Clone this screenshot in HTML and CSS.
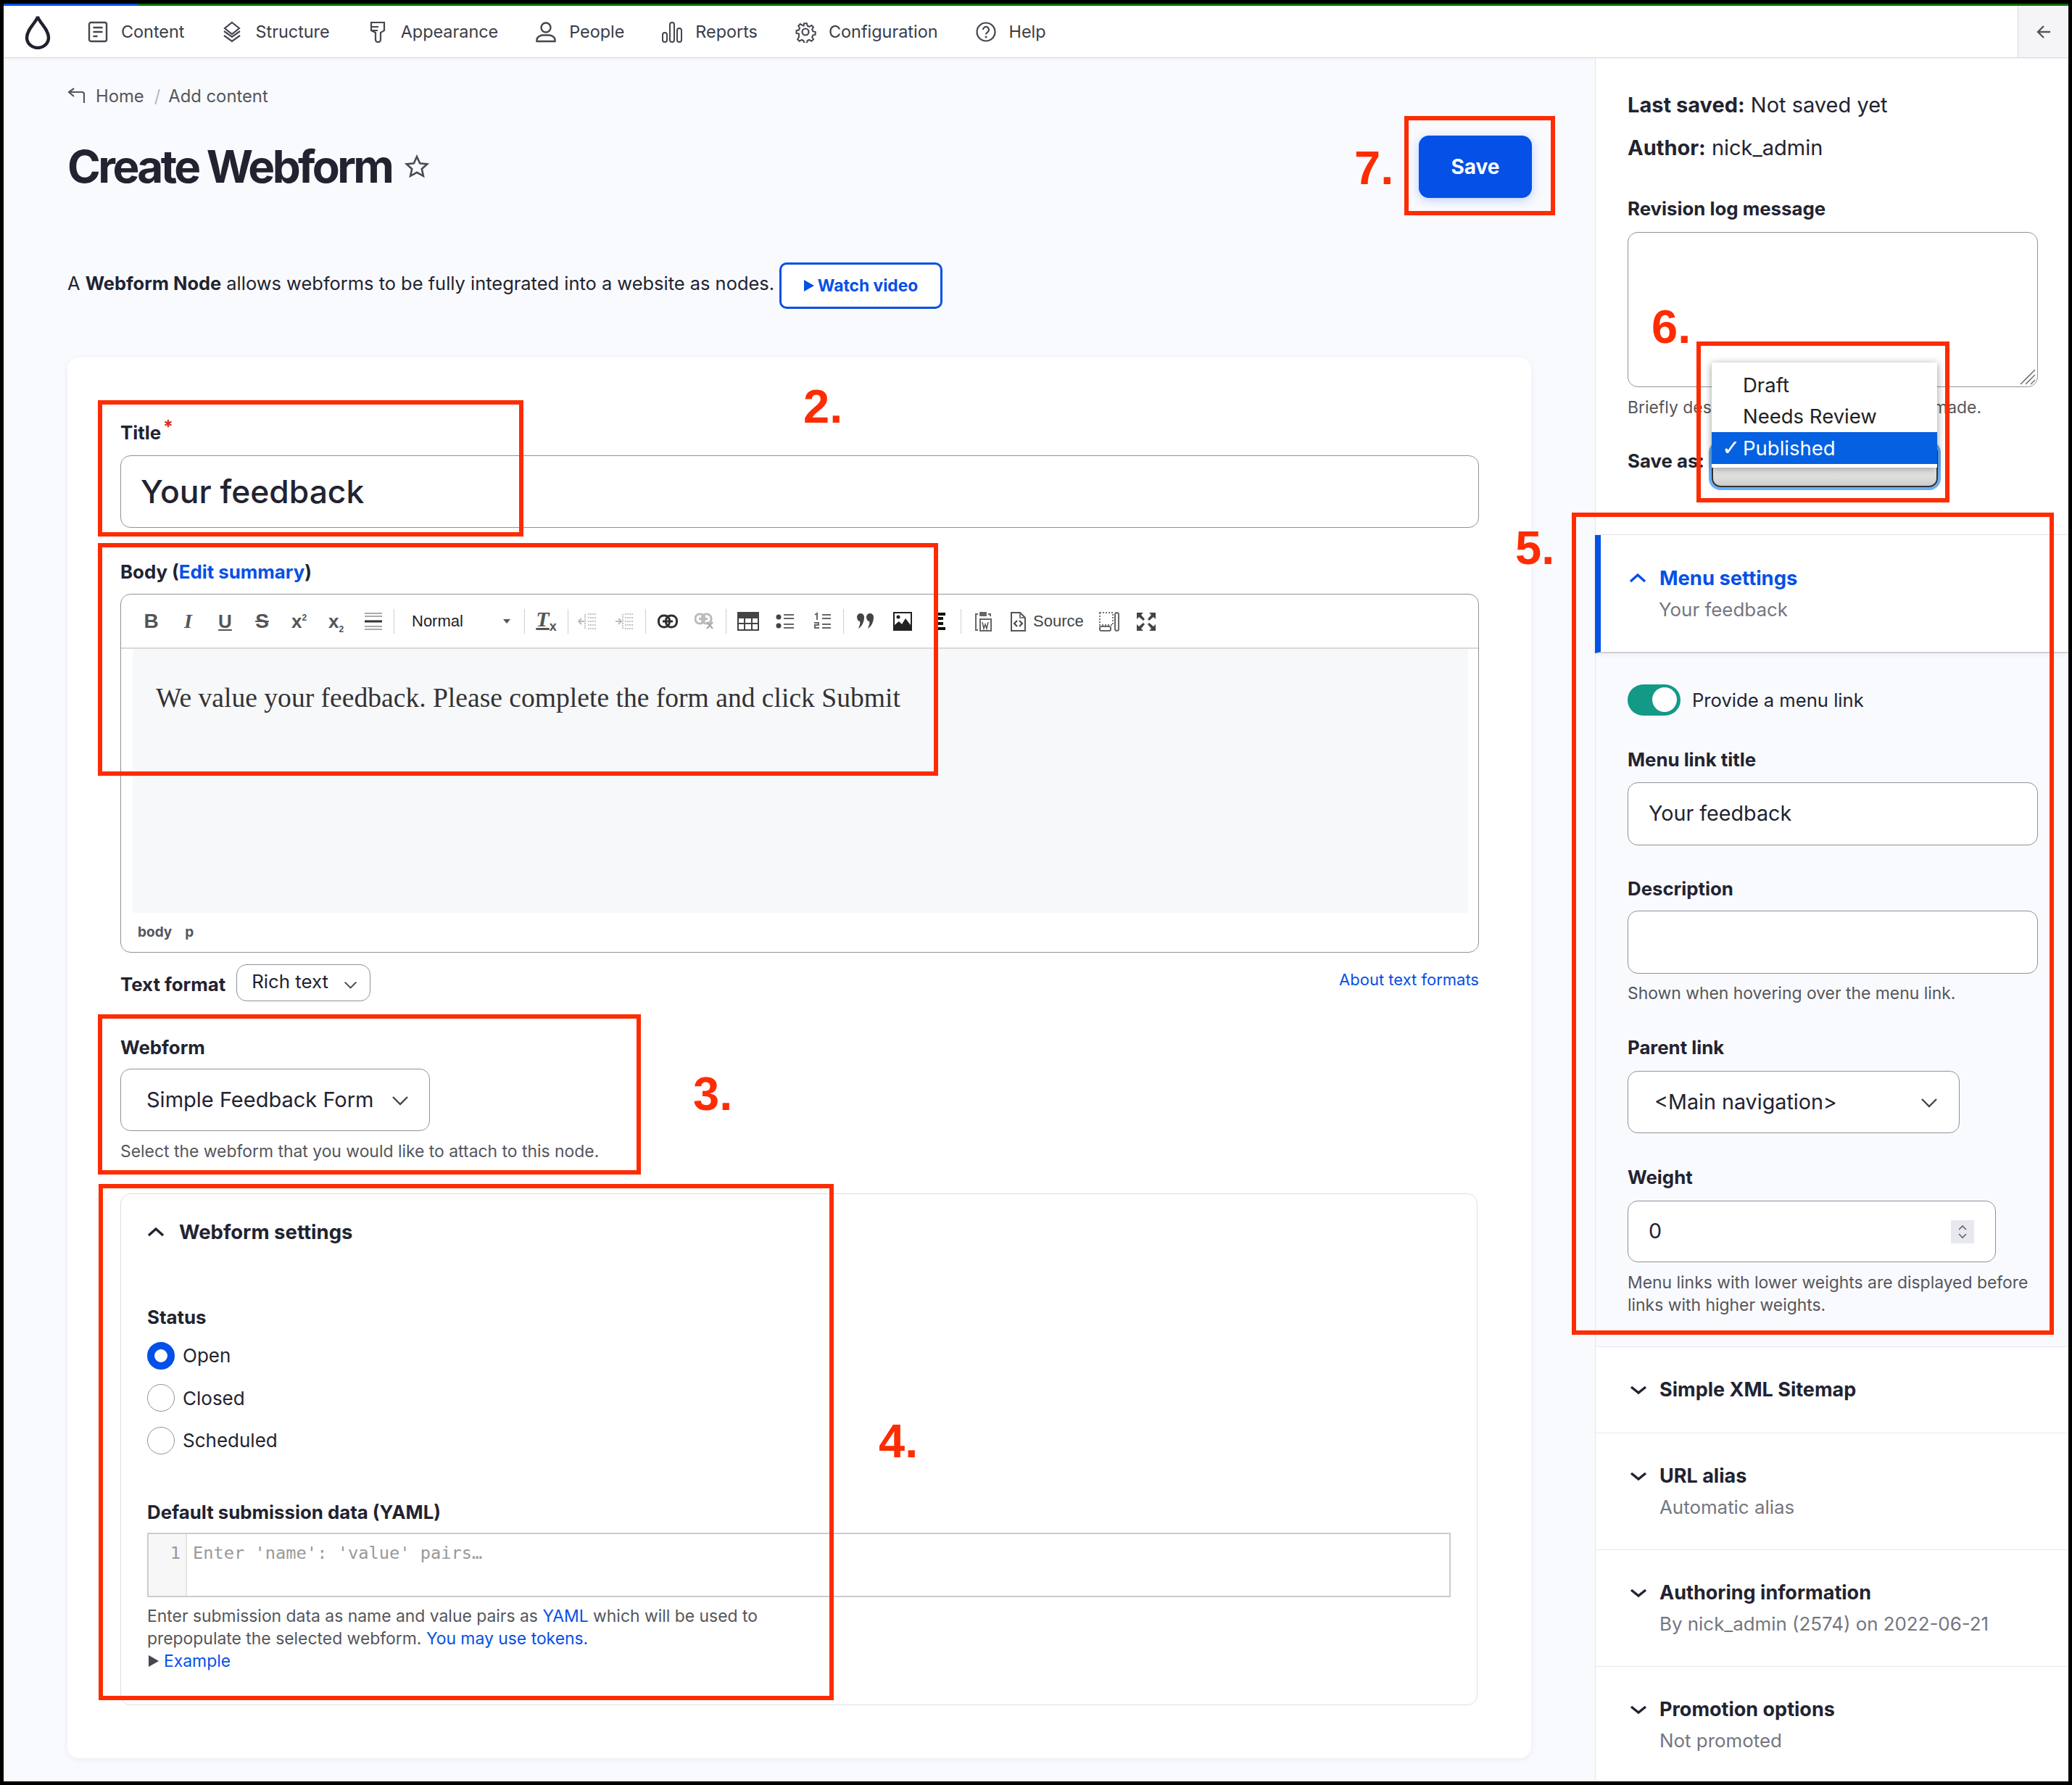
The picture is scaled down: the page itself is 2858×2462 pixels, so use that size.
FILE: index.html
```html
<!DOCTYPE html>
<html lang="en">
<head>
<meta charset="utf-8">
<title>Create Webform</title>
<link rel="stylesheet" href="styles.css">
</head>
<body>
<svg class="defs" width="0" height="0" aria-hidden="true">
  <symbol id="chev-down" viewBox="0 0 24 14"><path d="M2 2l10 10L22 2" fill="none" stroke="currentColor" stroke-width="2.4"/></symbol>
  <symbol id="chev-bold-down" viewBox="0 0 24 14"><path d="M2 3l10 8 10-8" fill="none" stroke="currentColor" stroke-width="3.4"/></symbol>
  <symbol id="chev-bold-up" viewBox="0 0 24 14"><path d="M2 12l10-9 10 9" fill="none" stroke="currentColor" stroke-width="3.4"/></symbol>
</svg>
<div class="frame">
  <div class="progress"><span class="progress-fill"></span></div>
  <header class="nav">
    <a class="logo"><svg width="38" height="48" viewBox="0 0 38 48"><path d="M19 3C17 11 4 20 4 32a15 14 0 0 0 30 0C34 20 21 11 19 3z" fill="none" stroke="#20212c" stroke-width="4.4"/></svg></a>
    <a class="nav-item"><span class="nav-icon"><svg width="28" height="30" viewBox="0 0 28 30"><rect x="2" y="2" width="24" height="26" rx="2.5" fill="none" stroke="#45464f" stroke-width="2.4"/><path d="M7.5 9h13M7.5 15h13M7.5 21h6" stroke="#45464f" stroke-width="2.4"/></svg></span>Content</a>
    <a class="nav-item"><span class="nav-icon"><svg width="30" height="30" viewBox="0 0 30 30"><path d="M15 2l10 8-10 8-10-8z" fill="none" stroke="#45464f" stroke-width="2.2"/><path d="M4 14l11 8 11-8M4 20l11 8 11-8" fill="none" stroke="#45464f" stroke-width="2.2"/></svg></span>Structure</a>
    <a class="nav-item"><span class="nav-icon"><svg width="22" height="30" viewBox="0 0 22 30"><path d="M2 2h18v11l-5 3v10a3.500 3 0 0 1-7 0V16l-6-3zM2 8h10M2 13h9" fill="none" stroke="#45464f" stroke-width="2.2"/></svg></span>Appearance</a>
    <a class="nav-item"><span class="nav-icon"><svg width="30" height="30" viewBox="0 0 30 30"><circle cx="15" cy="9" r="6.500" fill="none" stroke="#45464f" stroke-width="2.400"/><path d="M2.500 28v-2c0-4 5-6.500 8-6.500h9c3 0 8 2.500 8 6.500v2z" fill="none" stroke="#45464f" stroke-width="2.400"/></svg></span>People</a>
    <a class="nav-item"><span class="nav-icon"><svg width="30" height="30" viewBox="0 0 30 30"><rect x="2" y="16" width="6" height="13" rx="3" fill="none" stroke="#45464f" stroke-width="2"/><rect x="12" y="2" width="6" height="27" rx="3" fill="none" stroke="#45464f" stroke-width="2"/><rect x="22" y="10" width="6" height="19" rx="3" fill="none" stroke="#45464f" stroke-width="2"/></svg></span>Reports</a>
    <a class="nav-item"><span class="nav-icon"><svg width="30" height="30" viewBox="0 0 30 30"><circle cx="15" cy="15" r="4.500" fill="none" stroke="#45464f" stroke-width="2.200"/><path d="M13 2h4l1 3.800 2.800 1.200 3.400-2 2.800 2.800-2 3.400 1.200 2.800 3.800 1v4l-3.800 1-1.200 2.800 2 3.400-2.800 2.800-3.400-2-2.800 1.200-1 3.800h-4l-1-3.800-2.800-1.200-3.400 2-2.800-2.800 2-3.400L5 17.800 1.200 17v-4L5 12l1.200-2.800-2-3.400L7 3l3.400 2L12.200 5.800z" transform="translate(1.400 1.400) scale(.91)" fill="none" stroke="#45464f" stroke-width="2.200"/></svg></span>Configuration</a>
    <a class="nav-item"><span class="nav-icon"><svg width="30" height="30" viewBox="0 0 30 30"><circle cx="15" cy="15" r="12.500" fill="none" stroke="#45464f" stroke-width="2.200"/><path d="M11 12a4 4 0 1 1 6.500 3c-1.500 1.200-2.500 1.800-2.500 3.500" fill="none" stroke="#45464f" stroke-width="2.200"/><circle cx="15" cy="22" r="1.500" fill="#45464f"/></svg></span>Help</a>
    <a class="nav-collapse"><svg width="20" height="20" viewBox="0 0 20 20"><path d="M19 10H2M10 2l-8 8 8 8" fill="none" stroke="#55565b" stroke-width="2.400"/></svg></a>
  </header>
  <div class="columns">
    <main class="main">
      <nav class="breadcrumb">
        <svg width="24" height="22" viewBox="0 0 24 22"><path d="M23 21V9c0-2-1-3-3-3H3M9 1L2 6l7 6" fill="none" stroke="#55565b" stroke-width="2.200"/></svg>
        <a class="crumb">Home</a><span class="crumb-sep">/</span><a class="crumb">Add content</a>
      </nav>
      <div class="title-row">
        <h1 class="page-title">Create Webform</h1>
        <svg class="star" width="34" height="33" viewBox="0 0 34 33"><path d="M17 3l4.200 9.200 10 1.100-7.400 6.700 2.100 9.800-8.900-5-8.900 5 2.100-9.800-7.400-6.700 10-1.100z" fill="none" stroke="#4a4b53" stroke-width="2.600"/></svg>
        <button class="btn-save">Save</button>
      </div>
      <div class="intro"><p class="intro-text">A <strong>Webform Node</strong> allows webforms to be fully integrated into a website as nodes.</p><a class="btn-video"><span class="video-tri"></span>Watch video</a></div>
      <section class="card">
        <label class="label label-title">Title<sup class="req">*</sup></label>
        <div class="input input-title">Your feedback</div>
        <label class="label label-body">Body (<a class="link">Edit summary</a>)</label>
        <div class="editor">
          <div class="toolbar">
            <span class="tb"><b class="g">B</b></span>
            <span class="tb"><i class="g g-i">I</i></span>
            <span class="tb"><b class="g g-u">U</b></span>
            <span class="tb"><b class="g g-s">S</b></span>
            <span class="tb"><b class="g g-x">x<sup>2</sup></b></span>
            <span class="tb"><b class="g g-x">x<sub>2</sub></b></span>
            <span class="tb"><svg width="26" height="26" viewBox="0 0 26 26"><path d="M1 2h24M1 6h24M1 20h24M1 24h24" stroke="#aaa" stroke-width="2"/><path d="M1 13h24" stroke="#333" stroke-width="3"/></svg></span>
            <span class="sep sep-a"></span>
            <span class="combo">Normal<span class="combo-arrow"></span></span>
            <span class="sep"></span>
            <span class="tb tb-wide"><span class="g-tx">T<small>x</small></span></span>
            <span class="sep"></span>
            <span class="tb"><svg width="26" height="26" viewBox="0 0 26 26"><path d="M14 3h11M14 8h11M14 13h11M14 18h11M14 23h11M10 3v20" stroke="#c4c4c4" stroke-width="2" stroke-dasharray="2 1"/><path d="M9 13H1M5 9l-4 4 4 4" fill="none" stroke="#bbb" stroke-width="2"/></svg></span>
            <span class="tb"><svg width="26" height="26" viewBox="0 0 26 26"><path d="M14 3h11M14 8h11M14 13h11M14 18h11M14 23h11M11 3v20" stroke="#c4c4c4" stroke-width="2" stroke-dasharray="2 1"/><path d="M1 13h8M5 9l4 4-4 4" fill="none" stroke="#bbb" stroke-width="2"/></svg></span>
            <span class="sep sep-c"></span>
            <span class="tb"><svg width="28" height="22" viewBox="0 0 28 22"><rect x="1.500" y="3" width="15" height="16" rx="7" fill="none" stroke="#2f2f2f" stroke-width="3"/><rect x="11.500" y="3" width="15" height="16" rx="7" fill="none" stroke="#2f2f2f" stroke-width="3"/><path d="M7 11h14" stroke="#2f2f2f" stroke-width="3"/></svg></span>
            <span class="tb"><svg width="28" height="26" viewBox="0 0 28 26"><rect x="1" y="3" width="13" height="13" rx="6" fill="none" stroke="#bbb" stroke-width="3"/><rect x="10" y="3" width="13" height="13" rx="6" fill="none" stroke="#bbb" stroke-width="3"/><path d="M6 9.500h12" stroke="#bbb" stroke-width="3"/><path d="M17 14l8 9M25 14l-8 9" stroke="#aaa" stroke-width="2.400"/></svg></span>
            <span class="sep sep-c"></span>
            <span class="tb"><svg width="30" height="26" viewBox="0 0 30 26"><rect x="1" y="1" width="28" height="24" fill="#fff" stroke="#444" stroke-width="2"/><rect x="1" y="1" width="28" height="8" fill="#444"/><path d="M1 16h28M10 9v16M20 9v16" stroke="#444" stroke-width="2"/></svg></span>
            <span class="tb"><svg width="26" height="24" viewBox="0 0 26 24"><circle cx="4" cy="6" r="3.500" fill="#444"/><circle cx="4" cy="18" r="3.500" fill="#444"/><path d="M11 3h14M11 8h14M11 16h14M11 21h14" stroke="#666" stroke-width="2"/></svg></span>
            <span class="tb"><svg width="24" height="26" viewBox="0 0 24 26"><path d="M2 4l3-2v9M1 15h6v3H2v4h6" fill="none" stroke="#666" stroke-width="2"/><path d="M12 4h12M12 9h12M12 17h12M12 22h12" stroke="#666" stroke-width="2"/></svg></span>
            <span class="sep sep-c"></span>
            <span class="tb"><svg width="27" height="24" viewBox="0 0 27 24"><path d="M2 6a5 5 0 1 1 10 0c0 7-3 13-8 16 2-5 3-8 2-10C4 12 2 9 2 6zM15 6a5 5 0 1 1 10 0c0 7-3 13-8 16 2-5 3-8 2-10-2 0-4-3-4-6z" fill="#444"/></svg></span>
            <span class="tb"><svg width="26" height="26" viewBox="0 0 26 26"><rect x="1" y="1" width="24" height="24" fill="#fff" stroke="#222" stroke-width="2"/><circle cx="7" cy="7" r="2.500" fill="#222"/><path d="M2 24v-6l6-5 4 4 5-8 7 9v6z" fill="#222"/></svg></span>
            <span class="tb"><svg width="16" height="26" viewBox="0 0 16 26"><path d="M0 3h16M3 9h10M3 16h10M0 23h16" stroke="#111" stroke-width="4"/></svg></span>
            <span class="sep sep-c"></span>
            <span class="tb"><svg width="24" height="28" viewBox="0 0 24 28"><path d="M5 4H2v22h3M19 4h3v3" fill="none" stroke="#666" stroke-width="2"/><rect x="7" y="1" width="10" height="6" rx="1" fill="#666"/><rect x="8" y="11" width="15" height="16" fill="#fff" stroke="#666" stroke-width="2"/><path d="M11 15l2 9 2-6 2 6 2-9" fill="none" stroke="#555" stroke-width="1.500"/></svg></span>
            <span class="source"><svg width="21" height="27" viewBox="0 0 21 27"><path d="M1 1h12l7 7v18H1z" fill="none" stroke="#555" stroke-width="2"/><path d="M13 1v7h7" fill="none" stroke="#555" stroke-width="1.500"/><path d="M9 12l-4 4 4 4M12 12l4 4-4 4" fill="none" stroke="#444" stroke-width="2"/></svg>Source</span>
            <span class="tb"><svg width="28" height="27" viewBox="0 0 28 27"><rect x="1" y="1" width="18" height="17" fill="none" stroke="#777" stroke-width="2" stroke-dasharray="2 2"/><rect x="1" y="20" width="15" height="6" rx="2" fill="none" stroke="#666" stroke-width="2"/><rect x="22" y="1" width="5" height="25" rx="2.500" fill="none" stroke="#666" stroke-width="2"/></svg></span>
            <span class="tb"><svg width="28" height="27" viewBox="0 0 28 27"><path d="M1 1h9l-3 3 5 6-2 2-6-5-3 3zM27 1h-9l3 3-5 6 2 2 6-5 3 3zM1 26h9l-3-3 5-6-2-2-6 5-3-3zM27 26h-9l3-3-5-6 2-2 6 5 3-3z" fill="#444"/></svg></span>
          </div>
          <div class="editable"><p class="editable-text">We value your feedback. Please complete the form and click Submit</p></div>
          <div class="pathbar"><span>body</span><span>p</span></div>
        </div>
        <div class="format-row">
          <span class="label format-label">Text format</span>
          <span class="select select-format">Rich text<svg class="chev chev-sm" width="19" height="11"><use href="#chev-down"/></svg></span>
          <a class="link about">About text formats</a>
        </div>
        <label class="label label-webform">Webform</label>
        <div class="select select-webform">Simple Feedback Form<svg class="chev" width="24" height="14"><use href="#chev-down"/></svg></div>
        <p class="help help-webform">Select the webform that you would like to attach to this node.</p>
        <div class="details">
          <div class="details-head"><svg width="24" height="14" class="details-chev"><use href="#chev-bold-up"/></svg>Webform settings</div>
          <div class="label label-status">Status</div>
          <div class="radio radio-first"><span class="radio-dot radio-on"></span>Open</div>
          <div class="radio"><span class="radio-dot"></span>Closed</div>
          <div class="radio"><span class="radio-dot"></span>Scheduled</div>
          <div class="label label-yaml">Default submission data (YAML)</div>
          <div class="code"><span class="gutter">1</span><span class="code-ph">Enter 'name': 'value' pairs…</span></div>
          <p class="help help-yaml">Enter submission data as name and value pairs as <a class="link">YAML</a> which will be used to<br>prepopulate the selected webform. <a class="link">You may use tokens.</a><br><span class="tri"></span><a class="link">Example</a></p>
        </div>
      </section>
    </main>
    <aside class="side">
      <div class="meta">
        <p class="meta-line meta-first"><strong>Last saved:</strong> Not saved yet</p>
        <p class="meta-line meta-author"><strong>Author:</strong> nick_admin</p>
        <label class="label label-rev">Revision log message</label>
        <div class="textarea"><svg class="grip" width="22" height="22" viewBox="0 0 22 22"><path d="M1 21L21 1M8 21L21 8M15 21l6-6" stroke="#777" stroke-width="1.600"/></svg></div>
        <p class="help help-rev">Briefly describe the changes you have made.</p>
        <div class="saveas"><span class="label">Save as:</span><span class="native-select"></span></div>
      </div>
      <section class="acc-open">
        <div class="acc-head"><svg width="24" height="14" class="acc-chev"><use href="#chev-bold-up"/></svg><div class="acc-title">Menu settings</div><div class="acc-sub">Your feedback</div></div>
        <div class="acc-body">
          <div class="toggle-row"><span class="toggle"><span class="knob"></span></span>Provide a menu link</div>
          <div class="label sl sl-first">Menu link title</div>
          <div class="input input-side">Your feedback</div>
          <div class="label sl">Description</div>
          <div class="input input-side"></div>
          <p class="help help-menu">Shown when hovering over the menu link.</p>
          <div class="label sl sl-parent">Parent link</div>
          <div class="select select-parent">&lt;Main navigation&gt;<svg class="chev" width="24" height="14"><use href="#chev-down"/></svg></div>
          <div class="label sl sl-weight">Weight</div>
          <div class="input input-weight">0<span class="spinner"><svg width="14" height="22" viewBox="0 0 14 22"><path d="M2 8l5-5 5 5M2 14l5 5 5-5" fill="none" stroke="#666" stroke-width="1.600"/></svg></span></div>
          <p class="help help-weight">Menu links with lower weights are displayed before<br>links with higher weights.</p>
        </div>
      </section>
      <section class="acc acc-single"><svg width="24" height="14" class="acc-chev"><use href="#chev-bold-down"/></svg><div class="acc-title">Simple XML Sitemap</div></section>
      <section class="acc"><svg width="24" height="14" class="acc-chev"><use href="#chev-bold-down"/></svg><div class="acc-title">URL alias</div><div class="acc-sub">Automatic alias</div></section>
      <section class="acc"><svg width="24" height="14" class="acc-chev"><use href="#chev-bold-down"/></svg><div class="acc-title">Authoring information</div><div class="acc-sub">By nick_admin (2574) on 2022-06-21</div></section>
      <section class="acc"><svg width="24" height="14" class="acc-chev"><use href="#chev-bold-down"/></svg><div class="acc-title">Promotion options</div><div class="acc-sub">Not promoted</div></section>
    </aside>
  </div>
</div>
<div class="popup">
  <div class="popup-item">Draft</div>
  <div class="popup-item">Needs Review</div>
  <div class="popup-item popup-on"><span class="popup-check">✓</span>Published</div>
</div>
<span class="mark box-7"></span>
<span class="mark box-2"></span>
<span class="mark box-body"></span>
<span class="mark box-3"></span>
<span class="mark box-4"></span>
<span class="mark box-5"></span>
<span class="mark box-6"></span>
<span class="num num-2">2.</span>
<span class="num num-3">3.</span>
<span class="num num-4">4.</span>
<span class="num num-5">5.</span>
<span class="num num-6">6.</span>
<span class="num num-7">7.</span>
</body>
</html>
```

FILE: styles.css
```css
* { box-sizing: border-box; }
html, body { margin: 0; padding: 0; }
body { width: 2858px; height: 2462px; overflow: hidden; position: relative; background: #000; font-family: Inter, "Noto Sans", sans-serif; color: #222330; }
p, h1 { margin: 0; }
.defs { position: absolute; }
.frame { position: absolute; inset: 5px 5px 5px 5px; background: #f9fafe; display: flex; flex-direction: column; overflow: hidden; }
.progress { height: 3px; background: #0a6e0a; flex: none; }
.progress-fill { display: block; width: 185px; height: 3px; background: #0550e6; }

.nav { height: 72px; flex: none; background: #fff; border-bottom: 1px solid #d9dadf; display: flex; align-items: center; font-size: 23.400px; color: #3b3c46; box-shadow: 0 1px 3px rgba(0,0,0,.05); position: relative; z-index: 1; }
.logo { width: 115px; flex: none; padding-left: 28px; display: flex; align-items: center; }
.nav-item { display: flex; align-items: center; gap: 17px; margin-right: 51px; white-space: nowrap; }
.nav-icon { width: 30px; height: 32px; display: flex; align-items: center; justify-content: center; }
.nav-collapse { margin-left: auto; width: 70px; height: 71px; background: #f5f5f7; border-left: 1px solid #d9dadf; display: flex; align-items: center; justify-content: center; }

.columns { flex: 1; display: flex; min-height: 0; }
.main { width: 2195px; flex: none; padding: 32px 83px 0 88px; }
.breadcrumb { height: 40px; margin-bottom: 1px; display: flex; align-items: center; font-size: 23.800px; color: #55565b; }
.crumb { margin-left: 14px; }
.crumb:first-of-type { margin-left: 15px; }
.crumb-sep { margin: 0 -3px 0 14px; color: #b5b6bb; }
.title-row { margin-top: 34.500px; height: 86px; display: flex; align-items: center; }
.page-title { font-size: 62px; font-weight: 700; letter-spacing: -3.600px; line-height: 86px; }
.star { margin-left: 18px; }
.btn-save { margin-left: auto; width: 156px; height: 86px; border: 0; border-radius: 14px; background: #0550e6; color: #fff; font: 700 28px Inter, sans-serif; box-shadow: 0 3px 14px rgba(5,80,230,.25); margin-right: 4px; }
.intro { margin-top: 89px; height: 64px; display: flex; align-items: center; }
.intro-text { font-size: 25.450px; white-space: nowrap; padding-bottom: 6px; }
.btn-video { margin-left: 7px; width: 225px; height: 64px; border: 3px solid #0550e6; border-radius: 10px; color: #0550e6; font-size: 22.800px; font-weight: 700; display: flex; align-items: center; justify-content: center; gap: 5px; background: #fff; white-space: nowrap; }
.video-tri { border: 8px solid transparent; border-left: 14px solid #0550e6; border-right: 0; }

.card { margin-top: 67px; height: 1932px; width: 2019px; background: #fff; border-radius: 16px; padding: 84px 72px 0 73px; box-shadow: 0 2px 10px rgba(34,35,48,.06); }
.label { display: block; font-size: 25.800px; font-weight: 700; line-height: 36px; height: 36px; padding-top: 2px; color: #222330; }
.side .label { padding-top: 0; }
.req { color: #d32f1f; font-size: 25px; line-height: 0; margin-left: 3px; position: relative; top: 2px; }
.link { color: #0550e6; }
.input { border: 1px solid #8e929c; border-radius: 14px; background: #fff; display: flex; align-items: center; }
.input-title { margin-top: 15px; height: 100px; font-size: 44.400px; font-weight: 500; padding-left: 27px; }
.label-body { margin-top: 41px; }
.editor { margin-top: 14px; height: 495px; border: 1px solid #8e929c; border-radius: 14px; display: flex; flex-direction: column; overflow: hidden; background: #fff; }
.toolbar { height: 75px; flex: none; border-bottom: 2px solid #d8d8da; display: flex; align-items: center; padding-left: 16px; padding-top: 2px; color: #555; }
.tb { width: 51px; height: 34px; flex: none; display: flex; align-items: center; justify-content: center; }
.tb-wide { width: 59px; }
.sep { width: 1px; height: 34px; background: #cfcfd2; flex: none; }
.sep-a { margin: 0 1px 0 3px; }
.sep-c { margin: 0 4px; }
.g { font: 700 28px "Liberation Sans", sans-serif; color: #555; line-height: 30px; }
.g-i { font: italic 700 28px "Liberation Serif", serif; }
.g-u { text-decoration: underline; font-size: 26px; }
.g-s { text-decoration: line-through; font-size: 28px; }
.g-x { font-size: 26px; }
.g-x sup, .g-x sub { font-size: 12px; line-height: 0; }
.g-tx { font: italic 700 30px "Liberation Serif", serif; color: #555; text-decoration: underline; line-height: 30px; }
.g-tx small { font: 700 18px "Liberation Sans", sans-serif; vertical-align: -6px; }
.combo { width: 178px; height: 34px; padding-left: 23px; font: 400 22px "Liberation Sans", sans-serif; color: #222; display: flex; align-items: center; position: relative; }
.combo-arrow { position: absolute; right: 19px; top: 14px; border: 5px solid transparent; border-top: 6px solid #555; border-bottom: 0; }
.source { display: flex; align-items: center; gap: 10px; padding-left: 13px; margin-right: 10px; font: 400 22px "Liberation Sans", sans-serif; color: #444; }
.editable { margin: 0 14px 0 16px; height: 364px; flex: none; background: #f7f8fa; padding: 44px 32px; }
.editable-text { font: 400 37.600px/48px "Liberation Serif", serif; color: #333; white-space: nowrap; }
.pathbar { flex: 1; display: flex; align-items: center; gap: 18px; padding-left: 23px; font-size: 19px; font-weight: 700; color: #55565b; }
.format-row { margin-top: 16px; height: 51px; display: flex; }
.format-label { margin-top: 8px; }
.select { border: 1px solid #8e929c; border-radius: 14px; background: #fff; display: flex; align-items: center; position: relative; }
.select-format { margin-left: 15px; width: 185px; height: 51px; padding: 0 0 4px 20px; font-size: 25.800px; }
.chev { position: absolute; color: #45464f; }
.chev-sm { right: 17px; top: 22px; }
.about { margin-left: auto; font-size: 22px; margin-top: 8px; }
.label-webform { margin-top: 44px; }
.select-webform { margin-top: 13px; width: 427px; height: 86px; padding-left: 35px; font-size: 29px; }
.select-webform .chev { right: 28px; top: 36px; }
.help { font-size: 22.900px; line-height: 31px; color: #55565b; }
.help-webform { margin-top: 13px; }
.details { margin-top: 42px; height: 706px; width: 1872px; border: 1px solid #dcdee3; border-radius: 14px; padding: 32px 36px 0 36px; }
.details-head { height: 40px; font-size: 27.500px; font-weight: 700; display: flex; align-items: center; }
.details-chev { margin-right: 20px; color: #222330; }
.label-status { margin-top: 78px; }
.radio { margin-top: 20.500px; height: 38px; display: flex; align-items: center; gap: 11px; font-size: 26px; }
.radio-first { margin-top: 18px; }
.radio-dot { width: 38px; height: 38px; border-radius: 50%; border: 1px solid #8e929c; background: #fff; }
.radio-on { border: 10px solid #0550e6; }
.label-yaml { margin-top: 60px; }
.code { margin-top: 12px; height: 89px; border: 2px solid #ccc; display: flex; font: 23.700px/28px "DejaVu Sans Mono", monospace; color: #999; }
.gutter { width: 53px; background: #f7f7f7; border-right: 2px solid #e6e6e6; text-align: right; padding: 12px 7px 0 0; }
.code-ph { padding: 12px 0 0 8px; }
.help-yaml { margin-top: 11.500px; }
.tri { display: inline-block; border: 8px solid transparent; border-left: 14px solid #45464f; border-right: 0; margin: 0 7px 0 2px; }

.side { width: 653px; flex: none; background: #fff; border-left: 1px solid #e6e8ee; }
.meta { padding: 45px 42px 0 44px; height: 657px; }
.meta-line { font-size: 29px; line-height: 40px; }
.meta-author { margin-top: 19px; }
.label-rev { margin-top: 46px; }
.textarea { margin-top: 14px; height: 214px; border: 1px solid #8e929c; border-radius: 14px; position: relative; }
.grip { position: absolute; right: 2px; bottom: 2px; }
.help-rev { margin-top: 13px; }
.saveas { margin-top: 40px; height: 36px; position: relative; }
.native-select { position: absolute; left: 116px; top: -6px; width: 312px; height: 60px; border: 2px solid #333; border-radius: 12px; background: linear-gradient(#fff 40%, #ccc); box-shadow: 0 0 0 4px #67aef7; }

.acc-open { border-top: 1px solid #e6e8ee; }
.acc-head { height: 163px; background: #fff; border-left: 8px solid #0550e6; margin-left: -1px; border-bottom: 2px solid #cfd0d5; padding: 39px 0 0 80px; position: relative; box-shadow: 0 2px 6px rgba(0,0,0,.06); }
.acc-chev { position: absolute; left: 47px; top: 52px; color: #222330; }
.acc-head .acc-chev { left: 39px; color: #0550e6; }
.acc-title { font-size: 27px; font-weight: 700; line-height: 40px; }
.acc-head .acc-title { color: #0550e6; font-size: 27.400px; padding-left: 1px; }
.acc-sub { font-size: 25.900px; line-height: 34px; margin-top: 6px; color: #75767f; }
.acc-head .acc-sub { margin-top: 7px; }
.acc-body { background: #f9fafe; height: 957px; padding: 43px 42px 0 44px; border-bottom: 1px solid #e6e8ee; }
.toggle-row { height: 43px; display: flex; align-items: center; gap: 16px; font-size: 25.600px; }
.toggle { width: 73px; height: 43px; border-radius: 22px; background: #129a87; position: relative; flex: none; }
.knob { position: absolute; right: 5px; top: 4px; width: 34px; height: 34px; border-radius: 50%; background: #fff; }
.sl { margin-top: 42px; }
.sl-first { margin-top: 43px; }
.sl-parent { margin-top: 41px; }
.sl-weight { margin-top: 43px; }
.input-side { margin-top: 12.500px; height: 87px; padding: 0 0 2px 28px; font-size: 28.700px; }
.help-menu { margin-top: 12px; }
.select-parent { margin-top: 14px; width: 458px; height: 86px; padding: 0 0 2px 36px; font-size: 28.700px; }
.select-parent .chev { right: 29px; top: 36px; }
.input-weight { margin-top: 14px; width: 508px; height: 85px; padding: 0 0 2px 28px; font-size: 28.700px; position: relative; }
.spinner { position: absolute; right: 29px; top: 26px; width: 32px; height: 32px; background: #e8e9ee; display: flex; align-items: center; justify-content: center; }
.help-weight { margin-top: 12.500px; }
.acc { height: 161px; background: #fff; border-bottom: 1px solid #e6e8ee; padding: 39px 0 0 88px; position: relative; }
.acc-single { height: 119px; }

.popup { position: absolute; left: 2361px; top: 500px; width: 311px; height: 145px; background: #fff; box-shadow: 0 2px 10px rgba(0,0,0,.4); padding-top: 9px; font-size: 27.500px; color: #222; }
.popup-item { height: 43.500px; padding-left: 43px; display: flex; align-items: center; position: relative; }
.popup-on { background: #0561e2; color: #fff; }
.popup-check { position: absolute; left: 14px; font-size: 30px; font-family: "DejaVu Sans", sans-serif; }

.mark { position: absolute; border: 6px solid #fd2c03; }
.box-7 { left: 1937px; top: 160px; width: 208px; height: 137px; }
.box-2 { left: 135px; top: 552px; width: 587px; height: 188px; }
.box-body { left: 135px; top: 749px; width: 1159px; height: 321px; }
.box-3 { left: 135px; top: 1399px; width: 749px; height: 221px; }
.box-4 { left: 136px; top: 1633px; width: 1014px; height: 712px; }
.box-5 { left: 2168px; top: 707px; width: 665px; height: 1134px; }
.box-6 { left: 2340px; top: 471px; width: 349px; height: 222px; }
.num { position: absolute; font: 700 65px/66px "Liberation Sans", sans-serif; color: #fd2c03; }
.num-2 { left: 1108px; top: 528px; }
.num-3 { left: 956px; top: 1476px; }
.num-4 { left: 1212px; top: 1955px; }
.num-5 { left: 2090px; top: 723px; }
.num-6 { left: 2278px; top: 418px; }
.num-7 { left: 1868px; top: 199px; }
```
